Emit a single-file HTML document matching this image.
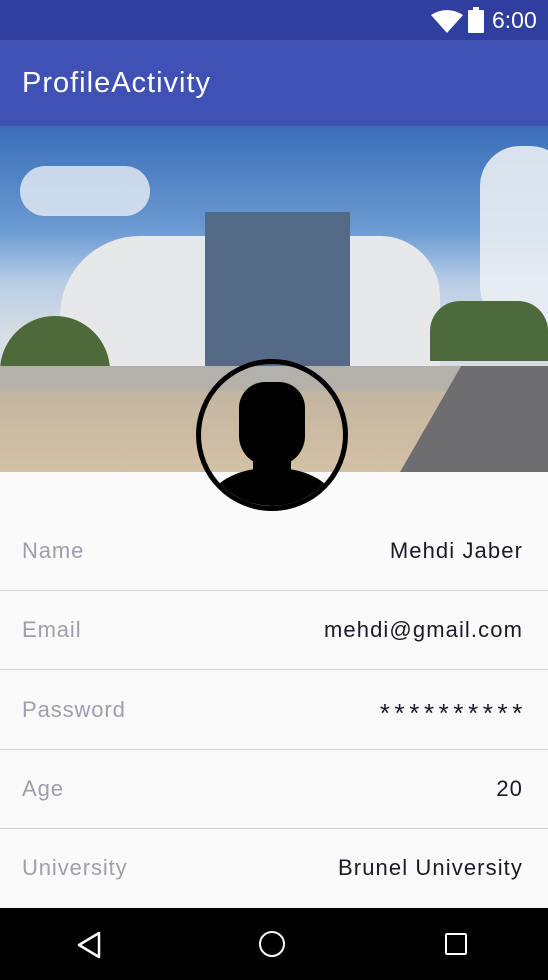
<!DOCTYPE html>
<html><head><style>
body{margin:0;width:548px;height:980px;overflow:hidden;font-family:"Liberation Sans",sans-serif;background:#fafafa;position:relative}
.sb{position:absolute;top:0;left:0;width:548px;height:40px;background:#303f9f}
.ab{position:absolute;top:40px;left:0;width:548px;height:86px;background:#3f51b5;color:#fff;font-size:29px;letter-spacing:1px;line-height:86px;padding-left:22px;box-sizing:border-box}
.photo{position:absolute;top:126px;left:0;width:548px;height:346px;overflow:hidden;background:linear-gradient(#3a6fb8 0%,#6a9ad2 30%,#b8cde6 45%,#d7dde4 60%)}
.row{position:absolute;left:0;width:548px;height:79px;border-bottom:1px solid #d6d6d6;font-size:22px;letter-spacing:0.9px;line-height:79px}
.row .l{position:absolute;left:22px;color:#9e9eae}
.row .r{position:absolute;right:25px;color:#1a1a2a;letter-spacing:1.1px}
.nav{position:absolute;top:908px;left:0;width:548px;height:72px;background:#000}
</style></head><body>
<div class="sb">
<svg style="position:absolute;left:430px;top:9px" width="34" height="24" viewBox="0 0 34 24"><path d="M1 6 Q17 -4 33 6 L17 24 Z" fill="#fff"/></svg>
<div style="position:absolute;left:468px;top:10px;width:16px;height:23px;background:#fff;border-radius:1px"></div>
<div style="position:absolute;left:473px;top:7px;width:6px;height:4px;background:#fff"></div>
<div style="position:absolute;left:492px;top:7px;color:#fff;font-size:23px">6:00</div>
</div>
<div class="ab">ProfileActivity</div>
<div class="photo">
<div style="position:absolute;left:20px;top:40px;width:130px;height:50px;background:#e8eef5;border-radius:30px;opacity:.8"></div>
<div style="position:absolute;left:480px;top:20px;width:90px;height:180px;background:#e9eef3;border-radius:40px;opacity:.9"></div>
<div style="position:absolute;left:60px;top:110px;width:380px;height:135px;background:#e6e8ea;border-radius:80px 60px 0 0"></div>
<div style="position:absolute;left:205px;top:86px;width:145px;height:160px;background:#556a86"></div>
<div style="position:absolute;left:0;top:190px;width:110px;height:110px;background:#4f6a3a;border-radius:50%"></div>
<div style="position:absolute;left:430px;top:175px;width:118px;height:60px;background:#4d6a3c;border-radius:30px 30px 0 0"></div>
<div style="position:absolute;left:0;top:240px;width:548px;height:30px;background:#b4b0aa"></div>
<div style="position:absolute;left:0;top:265px;width:548px;height:81px;background:linear-gradient(#c4b5a0,#d3c1a6)"></div>
<div style="position:absolute;top:240px;width:218px;height:106px;background:#6e6d70;transform:skewX(-30deg);transform-origin:bottom left;left:400px"></div>
</div>
<div style="position:absolute;left:196px;top:359px;width:142px;height:142px;border:5px solid #000;border-radius:50%;overflow:hidden">
<div style="position:absolute;left:8px;top:104px;width:126px;height:60px;background:#000;border-radius:60px 60px 0 0/36px 36px 0 0"></div>
<div style="position:absolute;left:52px;top:85px;width:38px;height:30px;background:#000"></div>
<div style="position:absolute;left:38px;top:18px;width:66px;height:84px;background:#000;border-radius:26px 26px 30px 30px"></div>
</div>
<div class="row" style="top:511px"><span class="l">Name</span><span class="r">Mehdi Jaber</span></div>
<div class="row" style="top:590px"><span class="l">Email</span><span class="r">mehdi@gmail.com</span></div>
<div class="row" style="top:670px"><span class="l">Password</span><span class="r" style="font-size:26px;letter-spacing:4.6px;right:21px;top:4px">**********</span></div>
<div class="row" style="top:749px"><span class="l">Age</span><span class="r">20</span></div>
<div class="row" style="top:828px;border:none"><span class="l">University</span><span class="r">Brunel University</span></div>
<div class="nav">
<svg style="position:absolute;left:76px;top:23px" width="26" height="28" viewBox="0 0 26 28"><path d="M23 2 L3 14 L23 26 Z" fill="none" stroke="#fff" stroke-width="2.5" stroke-linejoin="round"/></svg>
<div style="position:absolute;left:259px;top:23px;width:22px;height:22px;border:2.5px solid #fff;border-radius:50%"></div>
<div style="position:absolute;left:445px;top:25px;width:18px;height:18px;border:2.5px solid #fff;border-radius:2px"></div>
</div>
</body></html>
